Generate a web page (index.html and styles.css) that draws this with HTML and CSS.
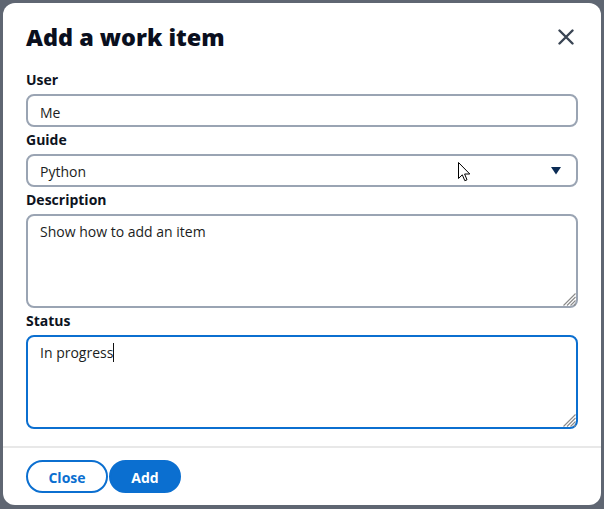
FILE: index.html
```html
<!DOCTYPE html>
<html lang="en">
<head>
<meta charset="utf-8">
<title>Add a work item</title>
<link rel="stylesheet" href="styles.css">
</head>
<body>
<div class="dialog">
  <div class="dialog-body">
    <div class="dialog-header">
      <h1 class="dialog-title">Add a work item</h1>
      <button class="icon-btn" aria-label="Close">
        <svg width="16" height="16" viewBox="0 0 16 16"><path d="M1.5 1.5 L14.5 14.5 M14.5 1.5 L1.5 14.5" stroke="#3a4554" stroke-width="2.4" stroke-linecap="round" fill="none"/></svg>
      </button>
    </div>
    <div class="fields">
      <label class="field">
        <span class="field-label">User</span>
        <input class="control input" type="text" value="Me">
      </label>
      <label class="field">
        <span class="field-label">Guide</span>
        <span class="select-wrap">
          <select class="control select"><option>Python</option></select>
          <svg class="select-arrow" width="10" height="8" viewBox="0 0 10 8"><path d="M0 0 H10 L5 7.5 Z" fill="#0b2c55"/></svg>
          <svg class="cursor" width="13" height="20" viewBox="0 0 13 20"><path d="M0.5 0.5 V16.5 L4.3 12.8 L6.8 18.7 L9 17.8 L6.6 12 H11.8 Z" fill="#fff" stroke="#000" stroke-width="1" stroke-linejoin="miter"/></svg>
        </span>
      </label>
      <label class="field">
        <span class="field-label">Description</span>
        <span class="area-wrap">
          <textarea class="control textarea">Show how to add an item</textarea>
          <svg class="grip" width="14" height="14" viewBox="0 0 14 14"><path d="M13.5 1.5 L1.5 13.5 M13.5 5 L5 13.5 M13.5 8.5 L8.5 13.5 M13.5 12 L12 13.5" stroke="#8a8a8a" stroke-width="1.1" fill="none"/></svg>
        </span>
      </label>
      <label class="field">
        <span class="field-label">Status</span>
        <span class="area-wrap">
          <textarea class="control textarea active">In progress</textarea>
          <span class="caret"></span>
          <svg class="grip" width="14" height="14" viewBox="0 0 14 14"><path d="M13.5 1.5 L1.5 13.5 M13.5 5 L5 13.5 M13.5 8.5 L8.5 13.5 M13.5 12 L12 13.5" stroke="#8a8a8a" stroke-width="1.1" fill="none"/></svg>
        </span>
      </label>
    </div>
  </div>
  <div class="dialog-footer">
    <button class="btn btn-outline">Close</button>
    <button class="btn btn-primary">Add</button>
  </div>
</div>
</body>
</html>
```

FILE: styles.css
```css
* { box-sizing: border-box; }
html, body { margin: 0; height: 100%; }
body {
  background: #5f6672;
  padding: 3px 3px 4px 3px;
  font-family: "Open Sans", "Noto Sans", sans-serif;
}
.dialog {
  background: #fff;
  border-radius: 12px;
  height: 502px;
  display: flex;
  flex-direction: column;
}
.dialog-body {
  padding: 18px 23px 17px;
}
.dialog-header {
  display: flex;
  align-items: center;
  justify-content: space-between;
  margin-bottom: 16px;
}
.dialog-title {
  margin: 0;
  font-size: 23.4px;
  line-height: 32px;
  font-weight: 800;
  color: #0a0f1e;
}
.icon-btn {
  border: 0;
  background: none;
  padding: 0;
  width: 16px;
  height: 16px;
  margin-right: 4px;
  display: flex;
}
.fields {
  display: flex;
  flex-direction: column;
  gap: 2px;
}
.field {
  display: flex;
  flex-direction: column;
  gap: 5px;
}
.field-label {
  font-size: 14px;
  line-height: 20px;
  font-weight: 700;
  color: #0d1321;
  padding-top: 1px;
  margin-bottom: -1px;
}
.control {
  width: 100%;
  border: 2px solid #9aa4b3;
  border-radius: 8px;
  background: #fff;
  font-family: inherit;
  font-size: 14px;
  line-height: 20px;
  color: #1b1d22;
  margin: 0;
  outline: none;
}
.input, .select {
  height: 33px;
  padding: 6px 12px 3px;
}
.select {
  appearance: none;
  -webkit-appearance: none;
  display: block;
}
.select-wrap, .area-wrap {
  position: relative;
  display: block;
}
.select-arrow {
  position: absolute;
  right: 17px;
  top: 13px;
}
.cursor {
  position: absolute;
  left: 432px;
  top: 8px;
}
.textarea {
  display: block;
  height: 94px;
  padding: 6px 12px;
  resize: none;
}
.textarea.active {
  border-color: #0b6fd0;
}
.grip {
  position: absolute;
  right: 2px;
  bottom: 2px;
}
.caret {
  position: absolute;
  left: 87px;
  top: 8px;
  width: 1px;
  height: 19px;
  background: #111;
}
.dialog-footer {
  border-top: 2px solid #e8e8e8;
  padding: 12px 23px;
  display: flex;
  gap: 1px;
}
.btn {
  height: 33px;
  border-radius: 999px;
  font-family: inherit;
  font-size: 14px;
  font-weight: 700;
  border: 2px solid #0b6fd0;
  padding: 1px 0 0;
}
.btn-outline {
  width: 82px;
  background: #fff;
  color: #0b6fd0;
}
.btn-primary {
  width: 72px;
  background: #0b6fd0;
  color: #fff;
}
```
